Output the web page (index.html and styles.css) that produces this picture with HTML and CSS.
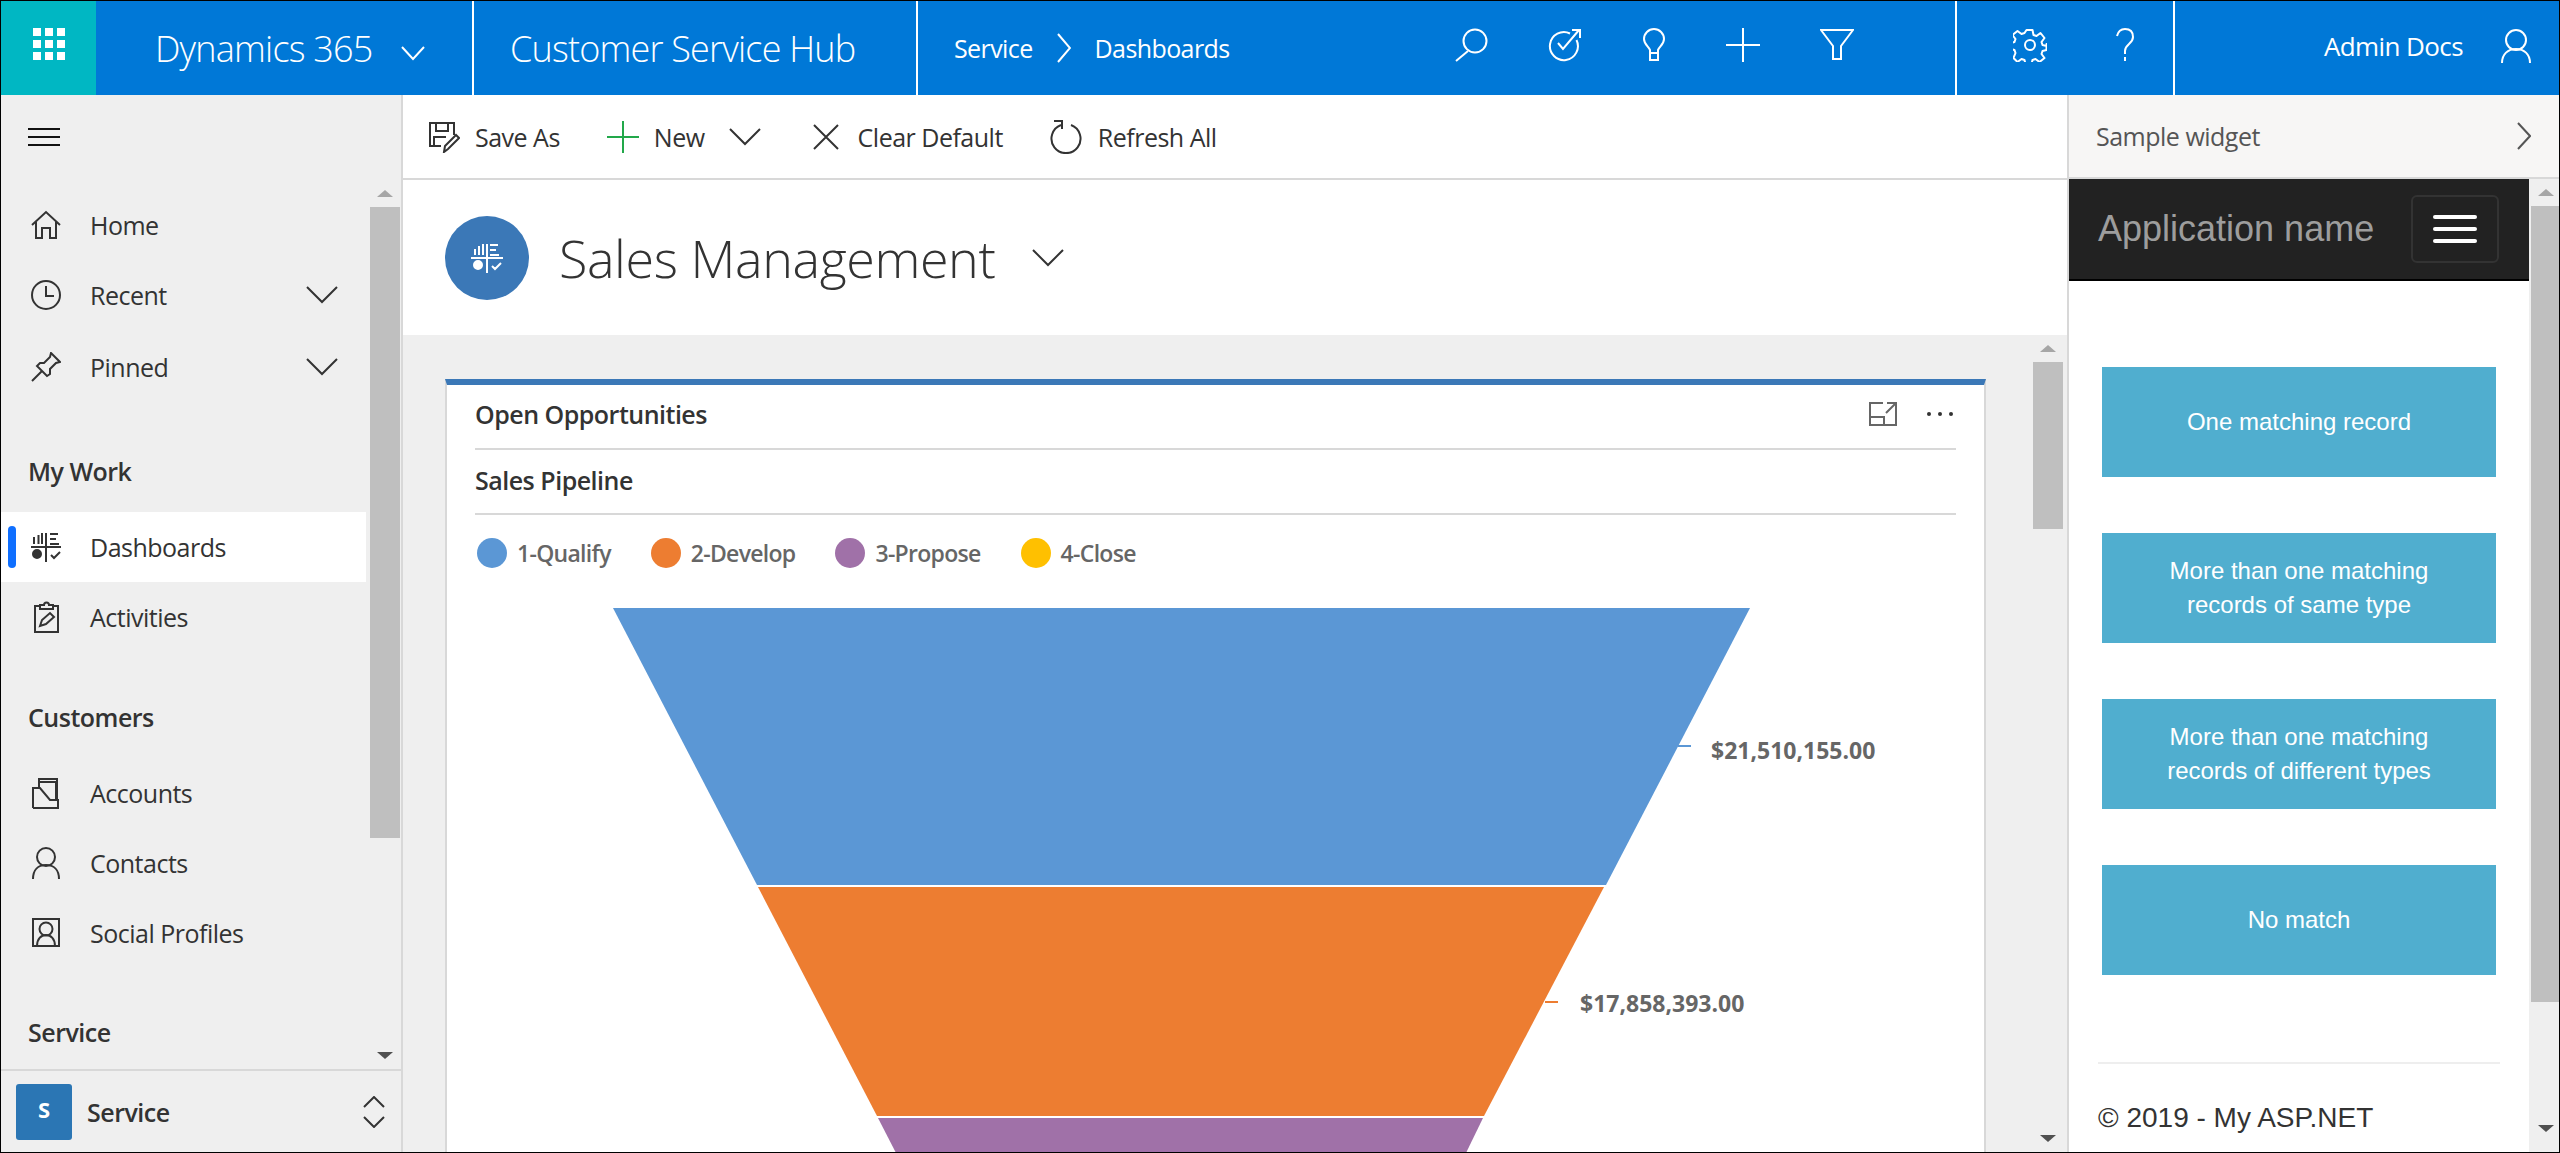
FILE: index.html
```html
<!DOCTYPE html>
<html lang="en">
<head>
    <meta charset="UTF-8">
    <title>Sales Management - Customer Service Hub</title>
    <link rel="stylesheet" href="styles.css">
</head>
<body>
    <div class="app">
        <header class="topbar">
            <div class="waffle">
                <svg width="32" height="32" viewBox="0 0 32 32" fill="#fff"><rect x="0" y="0" width="8" height="8"/><rect x="12" y="0" width="8" height="8"/><rect x="24" y="0" width="8" height="8"/><rect x="0" y="12" width="8" height="8"/><rect x="12" y="12" width="8" height="8"/><rect x="24" y="12" width="8" height="8"/><rect x="0" y="24" width="8" height="8"/><rect x="12" y="24" width="8" height="8"/><rect x="24" y="24" width="8" height="8"/></svg>
            </div>
            <div class="brand">
                <span class="brand-name">Dynamics 365</span>
                <svg class="brand-chevron" width="24" height="16" viewBox="0 0 24 16" fill="none" stroke="#fff" stroke-width="2"><path d="M1 2l11 12L23 2"/></svg>
            </div>
            <div class="app-name">Customer Service Hub</div>
            <nav class="crumbs">
                <span>Service</span>
                <svg width="14" height="30" viewBox="0 0 14 30" fill="none" stroke="#fff" stroke-width="2"><path d="M1 1l12 14L1 29"/></svg>
                <span>Dashboards</span>
            </nav>
            <div class="top-icons">
                <svg width="34" height="34" viewBox="0 0 34 34" fill="none" stroke="#fff" stroke-width="2"><circle cx="21" cy="13" r="11.5"/><path d="M14 23L2 33"/></svg>
                <svg width="34" height="34" viewBox="0 0 34 34" fill="none" stroke="#fff" stroke-width="2"><path d="M22 5.500A14 14 0 1 0 28.500 12"/><path d="M10 15l5 6L31 2M24 2h8v8"/></svg>
                <svg width="24" height="34" viewBox="0 0 24 34" fill="none" stroke="#fff" stroke-width="2"><path d="M8 25v-3C6 18 2 16 2 11a10 10 0 0 1 20 0c0 5-4 7-6 11v3z"/><path d="M8 25v7h8v-7"/></svg>
                <svg width="34" height="34" viewBox="0 0 34 34" fill="none" stroke="#fff" stroke-width="2"><path d="M17 0v34M0 17h34"/></svg>
                <svg width="34" height="34" viewBox="0 0 34 34" fill="none" stroke="#fff" stroke-width="2"><path d="M1 2h32L21 18v13h-8V18z"/></svg>
            </div>
            <div class="help-icons">
                <svg width="34" height="34" viewBox="0 0 34 34" fill="none" stroke="#fff" stroke-width="2"><circle cx="17" cy="17" r="5"/><path d="M14 2h6l1 5 3 1 4-3 4 5-3 4 1 3 4 1v-2 6l-4 1-1 3 3 4-5 4-4-3-3 1-1 4h-6l-1-4-3-1-4 3-4-4 2-5-1-3-4-1v-6l4-1 1-3-3-4 5-4 4 3 3-1z" stroke-linejoin="round" transform="translate(-.5 0)"/></svg>
                <svg width="20" height="34" viewBox="0 0 20 34" fill="none" stroke="#fff" stroke-width="2"><path d="M2 8c1-4 4-7 8-7 5 0 8 3 8 8 0 7-8 7-8 14v3"/><path d="M10 29v4"/></svg>
            </div>
            <div class="account">
                <span>Admin Docs</span>
                <svg width="30" height="34" viewBox="0 0 30 34" fill="none" stroke="#fff" stroke-width="2"><circle cx="15" cy="11" r="10"/><path d="M1 34c0-9 6-14 14-14s14 5 14 14"/></svg>
            </div>
        </header>

        <div class="workspace">
            <aside class="sitemap">
                <div class="sitemap-burger">
                    <svg width="32" height="18" viewBox="0 0 32 18" fill="#111"><rect y="0" width="32" height="2"/><rect y="8" width="32" height="2"/><rect y="16" width="32" height="2"/></svg>
                </div>
                <div class="sitemap-scroll">
                    <div class="sitemap-list">
                        <a class="nav-row nav-first">
                            <svg class="nav-icon" width="30" height="30" viewBox="0 0 30 30" fill="none" stroke="#333" stroke-width="2"><path d="M1 15L15 2l14 13M5 12v16h6V18h8v10h6V12"/></svg>
                            <span>Home</span>
                        </a>
                        <a class="nav-row nav-recent">
                            <svg class="nav-icon" width="30" height="30" viewBox="0 0 30 30" fill="none" stroke="#333" stroke-width="2"><circle cx="15" cy="15" r="14"/><path d="M15 6v10h8"/></svg>
                            <span>Recent</span>
                            <svg class="nav-chevron" width="32" height="18" viewBox="0 0 32 18" fill="none" stroke="#333" stroke-width="2"><path d="M1 1l15 15L31 1"/></svg>
                        </a>
                        <a class="nav-row nav-pinned">
                            <svg class="nav-icon" width="30" height="30" viewBox="0 0 30 30" fill="none" stroke="#333" stroke-width="2"><path d="M20 1l9 9-4 1-6 6 0 5-3 2-10-10 3-3 4 0 6-6zM11 19L1 29"/></svg>
                            <span>Pinned</span>
                            <svg class="nav-chevron" width="32" height="18" viewBox="0 0 32 18" fill="none" stroke="#333" stroke-width="2"><path d="M1 1l15 15L31 1"/></svg>
                        </a>
                        <div class="nav-group group-work">My Work</div>
                        <a class="nav-row nav-active">
                            <svg class="nav-icon" width="30" height="30" viewBox="0 0 30 30" fill="none" stroke="#333" stroke-width="2"><path d="M0 15h30M15 1v29M3 5v7M7.500 3v9M11 1v11M19 2h8M19 7h6M19 12h9M20 23l3 3 6-6" /><circle cx="6" cy="22" r="4" fill="#333"/></svg>
                            <span>Dashboards</span>
                        </a>
                        <a class="nav-row">
                            <svg class="nav-icon" width="30" height="32" viewBox="0 0 30 32" fill="none" stroke="#333" stroke-width="2"><path d="M9 5H4v26h23V5h-5M9 8V4h4a2.500 2.500 0 0 1 5 0h4v4z"/><path d="M9 25l2-6 8-7 4 4-8 7z"/></svg>
                            <span>Activities</span>
                        </a>
                        <div class="nav-group group-customers">Customers</div>
                        <a class="nav-row">
                            <svg class="nav-icon" width="30" height="32" viewBox="0 0 30 32" fill="none" stroke="#333" stroke-width="2"><path d="M2 31V11h6M8 11V5h17v19M13 1h0M8 5V2h18v20"/><path d="M2 11h7l10 12h8v8H2"/></svg>
                            <span>Accounts</span>
                        </a>
                        <a class="nav-row">
                            <svg class="nav-icon" width="30" height="32" viewBox="0 0 30 32" fill="none" stroke="#333" stroke-width="2"><circle cx="15" cy="10" r="9"/><path d="M2 32c0-9 5-14 13-14s13 5 13 14"/></svg>
                            <span>Contacts</span>
                        </a>
                        <a class="nav-row">
                            <svg class="nav-icon" width="30" height="30" viewBox="0 0 30 30" fill="none" stroke="#333" stroke-width="2"><rect x="2" y="1" width="26" height="27"/><circle cx="15" cy="11" r="6.500"/><path d="M6 28c0-7 4-11 9-11s9 4 9 11"/></svg>
                            <span>Social Profiles</span>
                        </a>
                        <div class="nav-group group-service">Service</div>
                    </div>
                    <div class="scrollbar">
                        <div class="arrow-up"></div>
                        <div class="scroll-thumb"></div>
                        <div class="arrow-down"></div>
                    </div>
                </div>
                <div class="area-switch">
                    <div class="area-tile">S</div>
                    <span class="area-name">Service</span>
                    <svg width="22" height="32" viewBox="0 0 22 32" fill="none" stroke="#333" stroke-width="2"><path d="M1 11L11 1l10 10M1 21l10 10 10-10"/></svg>
                </div>
            </aside>

            <main class="main">
                <div class="toolbar">
                    <button class="tool tool-save">
                        <svg width="32" height="32" viewBox="0 0 32 32" fill="none" stroke="#333" stroke-width="2"><path d="M13 25H2V2h24v12"/><path d="M8 2v8h12V2M6 25v-9h12"/><path d="M16 31l1-6L28 14l3 3-11 11z"/></svg>
                        <span>Save As</span>
                    </button>
                    <button class="tool tool-new">
                        <svg width="32" height="32" viewBox="0 0 32 32" fill="none" stroke="#22a84a" stroke-width="2"><path d="M16 0v32M0 16h32"/></svg>
                        <span>New</span>
                        <svg class="tool-chevron" width="32" height="18" viewBox="0 0 32 18" fill="none" stroke="#333" stroke-width="2"><path d="M1 1l15 15L31 1"/></svg>
                    </button>
                    <button class="tool tool-clear">
                        <svg width="26" height="26" viewBox="0 0 26 26" fill="none" stroke="#333" stroke-width="2"><path d="M1 1l24 24M25 1L1 25"/></svg>
                        <span>Clear Default</span>
                    </button>
                    <button class="tool tool-refresh">
                        <svg width="34" height="34" viewBox="0 0 34 34" fill="none" stroke="#333" stroke-width="2"><path d="M12 5a14.500 14.500 0 1 0 10 0"/><path d="M5 1h8v8"/></svg>
                        <span>Refresh All</span>
                    </button>
                </div>

                <div class="dash-title">
                    <div class="dash-badge">
                        <svg width="32" height="30" viewBox="0 0 32 30" fill="none" stroke="#fff" stroke-width="2"><path d="M0 15h32M16 1v29M4 6v6M8 3v9M12 1v11M19 2h8M19 7h6M19 12h9M21 23l3 3 6-6"/><circle cx="7" cy="22" r="4" fill="#fff"/></svg>
                    </div>
                    <h1 class="dash-name">Sales Management</h1>
                    <svg width="32" height="18" viewBox="0 0 32 18" fill="none" stroke="#333" stroke-width="2"><path d="M1 1l15 15L31 1"/></svg>
                </div>

                <div class="dash-body">
                    <section class="card">
                        <div class="card-head">
                            <span>Open Opportunities</span>
                            <div class="card-actions">
                                <svg width="28" height="24" viewBox="0 0 28 24" fill="none" stroke="#666" stroke-width="2"><path d="M14 1H1v22h26V10M1 15h14v8M18 1h9v9M27 1L17 11"/></svg>
                                <svg width="26" height="4" viewBox="0 0 26 4" fill="#333"><circle cx="2" cy="2" r="2"/><circle cx="13" cy="2" r="2"/><circle cx="24" cy="2" r="2"/></svg>
                            </div>
                        </div>
                        <div class="card-sub">Sales Pipeline</div>
                        <ul class="legend">
                            <li><i class="dot dot-qualify"></i>1-Qualify</li>
                            <li><i class="dot dot-develop"></i>2-Develop</li>
                            <li><i class="dot dot-propose"></i>3-Propose</li>
                            <li><i class="dot dot-close"></i>4-Close</li>
                        </ul>
                        <svg class="funnel" width="1540" height="546" viewBox="444 607 1540 546">
                            <polygon points="612,608 1749,608 1473,885 1473,885 1605,885 756,885" fill="none"/>
                            <polygon points="612,608 1749,608 1605,885 756,885" fill="#5b97d5"/>
                            <polygon points="757,887 1603,887 1483,1116 876,1116" fill="#ed7d31"/>
                            <polygon points="877,1118 1482,1118 1465,1153 895,1153" fill="#a071a8"/>
                            <path d="M1677 746h13" stroke="#5b97d5" stroke-width="2"/>
                            <path d="M1544 1002h13" stroke="#ed7d31" stroke-width="2"/>
                            <text class="funnel-label" x="1710" y="759">$21,510,155.00</text>
                            <text class="funnel-label" x="1579" y="1012">$17,858,393.00</text>
                        </svg>
                    </section>
                    <div class="scrollbar scrollbar-main">
                        <div class="arrow-up"></div>
                        <div class="scroll-thumb"></div>
                        <div class="arrow-down"></div>
                    </div>
                </div>
            </main>

            <aside class="widget">
                <div class="widget-head">
                    <span>Sample widget</span>
                    <svg width="14" height="28" viewBox="0 0 14 28" fill="none" stroke="#555" stroke-width="2"><path d="M1 1l12 13L1 27"/></svg>
                </div>
                <div class="widget-frame">
                    <div class="widget-page">
                        <div class="site-nav">
                            <span class="site-brand">Application name</span>
                            <div class="site-toggle"><i></i><i></i><i></i></div>
                        </div>
                        <div class="site-body">
                            <a class="match-btn">One matching record</a>
                            <a class="match-btn">More than one matching<br>records of same type</a>
                            <a class="match-btn">More than one matching<br>records of different types</a>
                            <a class="match-btn">No match</a>
                            <hr class="site-rule">
                            <footer class="site-foot">© 2019 - My ASP.NET</footer>
                        </div>
                    </div>
                    <div class="scrollbar scrollbar-widget">
                        <div class="arrow-up"></div>
                        <div class="scroll-thumb"></div>
                        <div class="arrow-down"></div>
                    </div>
                </div>
            </aside>
        </div>
    </div>
</body>
</html>
```

FILE: styles.css
```css
* {
    margin: 0;
    padding: 0;
    box-sizing: border-box;
}

html, body {
    width: 2560px;
    height: 1153px;
    overflow: hidden;
}

body {
    font-family: "Open Sans", "Noto Sans", sans-serif;
    color: #333;
    background: #fff;
}

.app {
    width: 2560px;
    height: 1153px;
    display: flex;
    flex-direction: column;
    border: 1px solid #000;
    overflow: hidden;
}

/* Top bar */
.topbar {
    flex: 0 0 94px;
    display: flex;
    align-items: stretch;
    background: #0078d7;
    color: #fff;
}

.waffle {
    flex: 0 0 95px;
    background: #00b7c3;
    display: flex;
    align-items: center;
    justify-content: center;
    padding-bottom: 8px;
}

.brand {
    flex: 0 0 378px;
    display: flex;
    align-items: center;
    padding-left: 59px;
    border-right: 2px solid #fff;
}

.brand-name {
    font-size: 36px;
    font-weight: 300;
    letter-spacing: -0.8px;
}

.brand-chevron {
    margin-left: 29px;
    margin-top: 10px;
}

.app-name {
    flex: 0 0 444px;
    display: flex;
    align-items: center;
    padding-left: 36px;
    font-size: 36px;
    font-weight: 300;
    letter-spacing: -0.8px;
    border-right: 2px solid #fff;
}

.crumbs {
    flex: 0 0 auto;
    width: 536px;
    display: flex;
    align-items: center;
    gap: 24px;
    padding-left: 36px;
    font-size: 25px;
    letter-spacing: -0.6px;
}

.top-icons {
    flex: 0 0 503px;
    display: flex;
    align-items: center;
    padding-left: 0;
    gap: 60px;
    padding-bottom: 6px;
    border-right: 2px solid #fff;
}

.help-icons {
    flex: 0 0 218px;
    display: flex;
    align-items: center;
    gap: 68px;
    padding-left: 56px;
    padding-bottom: 6px;
    border-right: 2px solid #fff;
}

.account {
    flex: 1;
    display: flex;
    align-items: center;
    justify-content: flex-end;
    gap: 38px;
    padding-right: 28px;
    font-size: 26px;
    letter-spacing: -0.6px;
    padding-bottom: 4px;
}

/* Workspace */
.workspace {
    flex: 1;
    display: flex;
    min-height: 0;
}

/* Left navigation */
.sitemap {
    flex: 0 0 400px;
    display: flex;
    flex-direction: column;
    background: #efefef;
    border-right: 2px solid #d8d8d8;
}

.sitemap-burger {
    flex: 0 0 85px;
    padding: 33px 0 0 27px;
}

.sitemap-scroll {
    flex: 1;
    display: flex;
    min-height: 0;
}

.sitemap-list {
    flex: 0 0 365px;
    overflow: hidden;
}

.nav-row {
    height: 70px;
    display: flex;
    align-items: center;
    padding-left: 30px;
    gap: 29px;
    font-size: 25px;
    letter-spacing: -0.5px;
    color: #333;
}

.nav-icon {
    flex: 0 0 30px;
}

.nav-first {
    margin-top: 10px;
}

.nav-recent,
.nav-pinned {
    margin-bottom: 2px;
}

.nav-chevron {
    margin-left: auto;
    margin-right: 28px;
}

.nav-group {
    padding-left: 27px;
    font-size: 25px;
    font-weight: 600;
    letter-spacing: -0.5px;
    height: 38px;
    line-height: 38px;
}

.group-work {
    margin-top: 50px;
    margin-bottom: 22px;
}

.group-customers {
    margin-top: 46px;
    margin-bottom: 22px;
}

.group-service {
    margin-top: 45px;
}

.nav-active {
    background: #fff;
    position: relative;
}

.nav-active::before {
    content: "";
    position: absolute;
    left: 7px;
    top: 14px;
    width: 8px;
    height: 42px;
    border-radius: 4px;
    background: #0f6fff;
}

.scrollbar {
    flex: 0 0 33px;
    display: flex;
    flex-direction: column;
    align-items: center;
    padding-left: 1px;
    margin-left: 2px;
}

.arrow-up,
.arrow-down {
    flex: 0 0 auto;
    width: 0;
    height: 0;
    border-left: 8px solid transparent;
    border-right: 8px solid transparent;
}

.arrow-up {
    margin-top: 10px;
    margin-bottom: 10px;
    border-bottom: 7px solid #a6a6a6;
}

.arrow-down {
    margin-top: auto;
    margin-bottom: 10px;
    border-top: 7px solid #505050;
}

.scroll-thumb {
    width: 30px;
    height: 631px;
    background: #bfbfbf;
}

.area-switch {
    flex: 0 0 83px;
    display: flex;
    align-items: center;
    padding: 0 0 0 15px;
    border-top: 2px solid #d8d8d8;
}

.area-tile {
    width: 56px;
    height: 56px;
    border-radius: 3px;
    background: #2b76b4;
    color: #fff;
    font-size: 22px;
    font-weight: 700;
    text-align: center;
    line-height: 50px;
}

.area-name {
    margin-left: 15px;
    font-size: 25px;
    font-weight: 600;
    letter-spacing: -0.5px;
    flex: 1;
}

.area-switch svg {
    margin-right: 16px;
}

/* Main */
.main {
    flex: 0 0 1664px;
    display: flex;
    flex-direction: column;
    min-width: 0;
}

.toolbar {
    flex: 0 0 85px;
    display: flex;
    align-items: center;
    padding-left: 25px;
    border-bottom: 2px solid #d8d8d8;
}

.tool {
    display: flex;
    align-items: center;
    border: none;
    background: none;
    font-family: inherit;
    font-size: 25px;
    letter-spacing: -0.5px;
    color: #333;
}

.tool span {
    margin-left: 15px;
}

.tool-new {
    margin-left: 47px;
}

.tool-chevron {
    margin-left: 24px;
}

.tool-clear {
    margin-left: 52px;
}

.tool-clear span {
    margin-left: 19px;
}

.tool-refresh {
    margin-left: 46px;
}

.dash-title {
    flex: 0 0 155px;
    display: flex;
    align-items: center;
    padding-left: 42px;
}

.dash-badge {
    width: 84px;
    height: 84px;
    border-radius: 50%;
    background: #3b78b7;
    display: flex;
    align-items: center;
    justify-content: center;
}

.dash-name {
    margin-left: 30px;
    margin-right: 37px;
    font-size: 52px;
    font-weight: 300;
    letter-spacing: -0.4px;
    color: #333;
}

.dash-body {
    flex: 1;
    display: flex;
    min-height: 0;
    background: #efefef;
    padding: 44px 0 0 42px;
}

.card {
    flex: 0 0 1541px;
    background: #fff;
    border-top: 6px solid #3b78b7;
    border-left: 2px solid #d8d8d8;
    border-right: 2px solid #d8d8d8;
    padding: 0 28px;
    overflow: hidden;
}

.card-head {
    height: 65px;
    display: flex;
    align-items: center;
    justify-content: space-between;
    font-size: 25px;
    font-weight: 600;
    letter-spacing: -0.5px;
    border-bottom: 2px solid #d8d8d8;
    padding-bottom: 6px;
}

.card-actions {
    display: flex;
    align-items: center;
    gap: 30px;
    padding-right: 3px;
}

.card-sub {
    height: 65px;
    line-height: 60px;
    font-size: 25px;
    font-weight: 600;
    letter-spacing: -0.5px;
    border-bottom: 2px solid #d8d8d8;
}

.legend {
    list-style: none;
    display: flex;
    height: 92px;
    align-items: center;
    padding-left: 2px;
    padding-bottom: 16px;
    font-size: 23px;
    font-weight: 600;
    letter-spacing: -0.7px;
    color: #666;
    gap: 40px;
}

.legend li {
    display: flex;
    align-items: center;
    gap: 10px;
}

.dot {
    width: 30px;
    height: 30px;
    border-radius: 50%;
}

.dot-qualify { background: #5b97d5; }
.dot-develop { background: #ed7d31; }
.dot-propose { background: #a071a8; }
.dot-close { background: #ffc000; }

.funnel {
    display: block;
    margin-left: -30px;
}

.funnel-label {
    font-family: "Open Sans", sans-serif;
    font-size: 23px;
    font-weight: 700;
    fill: #666;
}

.scrollbar-main {
    margin-left: 45px;
    margin-top: -44px;
}

.scrollbar-main .scroll-thumb {
    height: 167px;
}

/* Widget panel */
.widget {
    flex: 1;
    display: flex;
    flex-direction: column;
    border-left: 2px solid #d8d8d8;
    min-width: 0;
}

.widget-head {
    flex: 0 0 84px;
    display: flex;
    align-items: center;
    justify-content: space-between;
    padding: 0 28px 0 27px;
    background: #f7f6f5;
    border-bottom: 2px solid #d8d8d8;
    font-size: 25px;
    letter-spacing: -0.5px;
    color: #555;
}

.widget-frame {
    flex: 1;
    display: flex;
    min-height: 0;
}

.widget-page {
    flex: 0 0 460px;
    height: 954px;
    overflow: hidden;
    font-family: "Liberation Sans", Arial, sans-serif;
}

.site-nav {
    height: 102px;
    display: flex;
    align-items: center;
    justify-content: space-between;
    background: #222;
    border-bottom: 2px solid #000;
    padding: 0 30px 0 29px;
}

.site-brand {
    font-size: 36px;
    color: #9d9d9d;
}

.site-toggle {
    width: 88px;
    height: 68px;
    border: 2px solid #333;
    border-radius: 6px;
    display: flex;
    flex-direction: column;
    align-items: center;
    justify-content: center;
    gap: 8px;
}

.site-toggle i {
    width: 44px;
    height: 4px;
    border-radius: 2px;
    background: #fff;
}

.site-body {
    padding: 86px 29px 0;
}

.match-btn {
    height: 110px;
    margin: 0 4px 56px;
    display: flex;
    align-items: center;
    justify-content: center;
    text-align: center;
    background: #50aecf;
    color: #fff;
    font-size: 24px;
    line-height: 34px;
}

.site-rule {
    border: none;
    border-top: 2px solid #eee;
    margin-top: 87px;
}

.site-foot {
    margin-top: 38px;
    font-size: 28px;
    color: #333;
}

.scrollbar-widget {
    margin-left: 0;
    padding-left: 0;
    background: #efefef;
}

.scrollbar-widget .scroll-thumb {
    height: 796px;
}

.scrollbar-widget .arrow-down {
    margin-bottom: 20px;
}
```
